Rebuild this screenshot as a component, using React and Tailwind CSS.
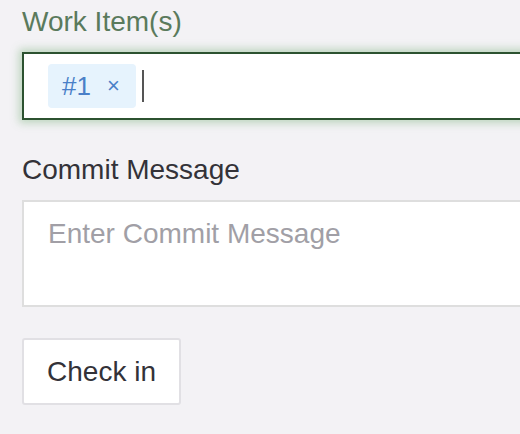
import React from 'react';

const font = { fontFamily: '"Liberation Sans", Arial, sans-serif' };

const WorkItemChip = ({ id }) => (
  <div className="flex items-center h-[44px] pl-[14px] pr-[16px] rounded-[4px] bg-[#e6f3fd] text-[#4a80c8]">
    <span className="text-[26px] leading-none">#{id}</span>
    <span className="ml-[16px] text-[22px] leading-none">×</span>
  </div>
);

export default function App() {
  return (
    <div className="min-h-screen w-[520px] h-[434px] overflow-hidden bg-[#f3f2f5] pl-[22px] pt-[6px]" style={font}>
      <div className="w-[560px]">
        <label className="block text-[28px] leading-[32px] text-[#5a7a5c]">Work Item(s)</label>
        <div className="mt-[14px] h-[68px] flex items-center pl-[24px] bg-white border-2 border-[#2c5230] shadow-[0_0_8px_3px_rgba(90,160,90,0.35)]">
          <WorkItemChip id={1} />
          <span className="ml-[6px] w-[2px] h-[32px] bg-[#555]" />
        </div>

        <label className="block mt-[34px] text-[28px] leading-[32px] text-[#333238]">Commit Message</label>
        <textarea
          placeholder="Enter Commit Message"
          className="block mt-[14px] w-full h-[107px] resize-none bg-white border-2 border-[#dedede] pl-[24px] pt-[16px] text-[28px] leading-[32px] text-[#333238] placeholder:text-[#a19fa6] outline-none"
          style={font}
        />

        <button className="mt-[31px] h-[67px] w-[159px] bg-white border-2 border-[#e1e0e4] rounded-[3px] text-[28px] text-[#333238] flex items-center justify-center" style={font}>
          Check in
        </button>
      </div>
    </div>
  );
}
